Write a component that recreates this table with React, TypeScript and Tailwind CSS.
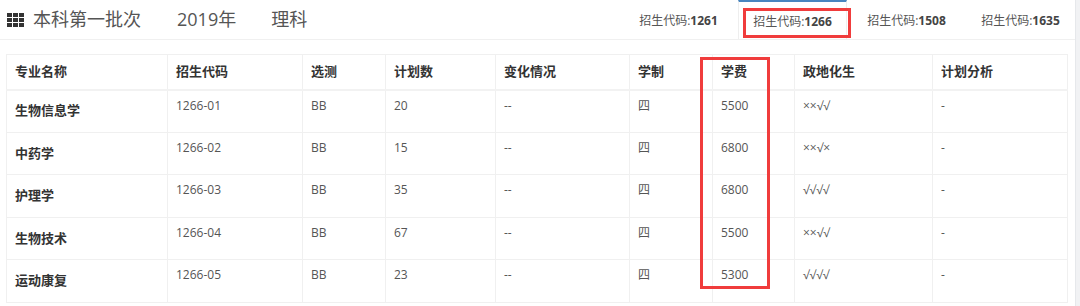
const tabs = ["1261", "1266", "1508", "1635"];

const cols = [
  { title: "专业名称", w: "w-[161px]" },
  { title: "招生代码", w: "w-[135px]" },
  { title: "选测", w: "w-[83px]" },
  { title: "计划数", w: "w-[110px]" },
  { title: "变化情况", w: "w-[134px]" },
  { title: "学制", w: "w-[83px]" },
  { title: "学费", w: "w-[82px]" },
  { title: "政地化生", w: "w-[138px]" },
  { title: "计划分析", w: "w-[135px]" },
];

const rows = [
  ["生物信息学", "1266-01", "BB", "20", "--", "四", "5500", "××√√", "-"],
  ["中药学", "1266-02", "BB", "15", "--", "四", "6800", "××√×", "-"],
  ["护理学", "1266-03", "BB", "35", "--", "四", "6800", "√√√√", "-"],
  ["生物技术", "1266-04", "BB", "67", "--", "四", "5500", "××√√", "-"],
  ["运动康复", "1266-05", "BB", "23", "--", "四", "5300", "√√√√", "-"],
];

function GridIcon() {
  return (
    <div className="grid grid-cols-[5px_5px_5px] grid-rows-[4px_4px_4px] gap-[1px]">
      {Array.from({ length: 9 }).map((_, i) => (
        <span key={i} className="bg-[#333]" />
      ))}
    </div>
  );
}

export default function App() {
  return (
    <div
      className="relative flex h-[306px] w-[1080px] overflow-hidden bg-white text-[#555]"
      style={{ fontFamily: '"Open Sans", "Noto Sans CJK SC", sans-serif' }}
    >
      <div className="flex w-[1075px] flex-col">
        <header className="flex h-[40px] items-stretch justify-between border-b border-[#f0f0f0]">
          <div className="flex items-center pl-[7px] text-[18px] text-[#555]">
            <GridIcon />
            <span className="ml-[9px]">本科第一批次</span>
            <span className="ml-[36px]">2019年</span>
            <span className="ml-[35px]">理科</span>
          </div>
          <div className="flex gap-[5px]">
            {tabs.map((t) => (
              <div
                key={t}
                className={
                  "flex w-[109px] items-center justify-center pt-[3px] text-[12px] " +
                  (t === "1266"
                    ? "border-x border-t-2 border-x-[#eeeeee] border-t-[#4785bf] bg-white"
                    : "")
                }
              >
                招生代码:<b className="text-[#444]">{t}</b>
              </div>
            ))}
          </div>
        </header>

        <table className="ml-[6px] mt-[14px] w-[1061px] table-fixed border-collapse text-[12px]">
          <colgroup>
            {cols.map((c) => (
              <col key={c.title} className={c.w} />
            ))}
          </colgroup>
          <thead>
            <tr className="h-[35px] border-b-2 border-[#f2f2f2]">
              {cols.map((c) => (
                <th
                  key={c.title}
                  className="border border-[#f0f0f0] px-[8px] text-left align-middle text-[13px] font-bold text-[#333]"
                >
                  {c.title}
                </th>
              ))}
            </tr>
          </thead>
          <tbody>
            {rows.map((r) => (
              <tr key={r[1]} className="h-[42.5px]">
                {r.map((v, i) =>
                  i === 0 ? (
                    <td
                      key={i}
                      className="border border-[#f0f0f0] px-[8px] align-middle text-[13px] font-bold text-[#333]"
                    >
                      {v}
                    </td>
                  ) : (
                    <td
                      key={i}
                      className="border border-[#f0f0f0] px-[8px] pt-[6px] align-top leading-[18px]"
                    >
                      {v}
                    </td>
                  )
                )}
              </tr>
            ))}
          </tbody>
        </table>
      </div>
      <div className="w-[5px] border-l border-[#e6e8eb] bg-[#f1f2f4]" />

      <div className="absolute left-[743px] top-[8px] h-[30px] w-[108px] border-[3px] border-[#f03c3c]" />
      <div className="absolute left-[700px] top-[57px] h-[232px] w-[70px] border-[3px] border-[#f03c3c]" />
    </div>
  );
}
